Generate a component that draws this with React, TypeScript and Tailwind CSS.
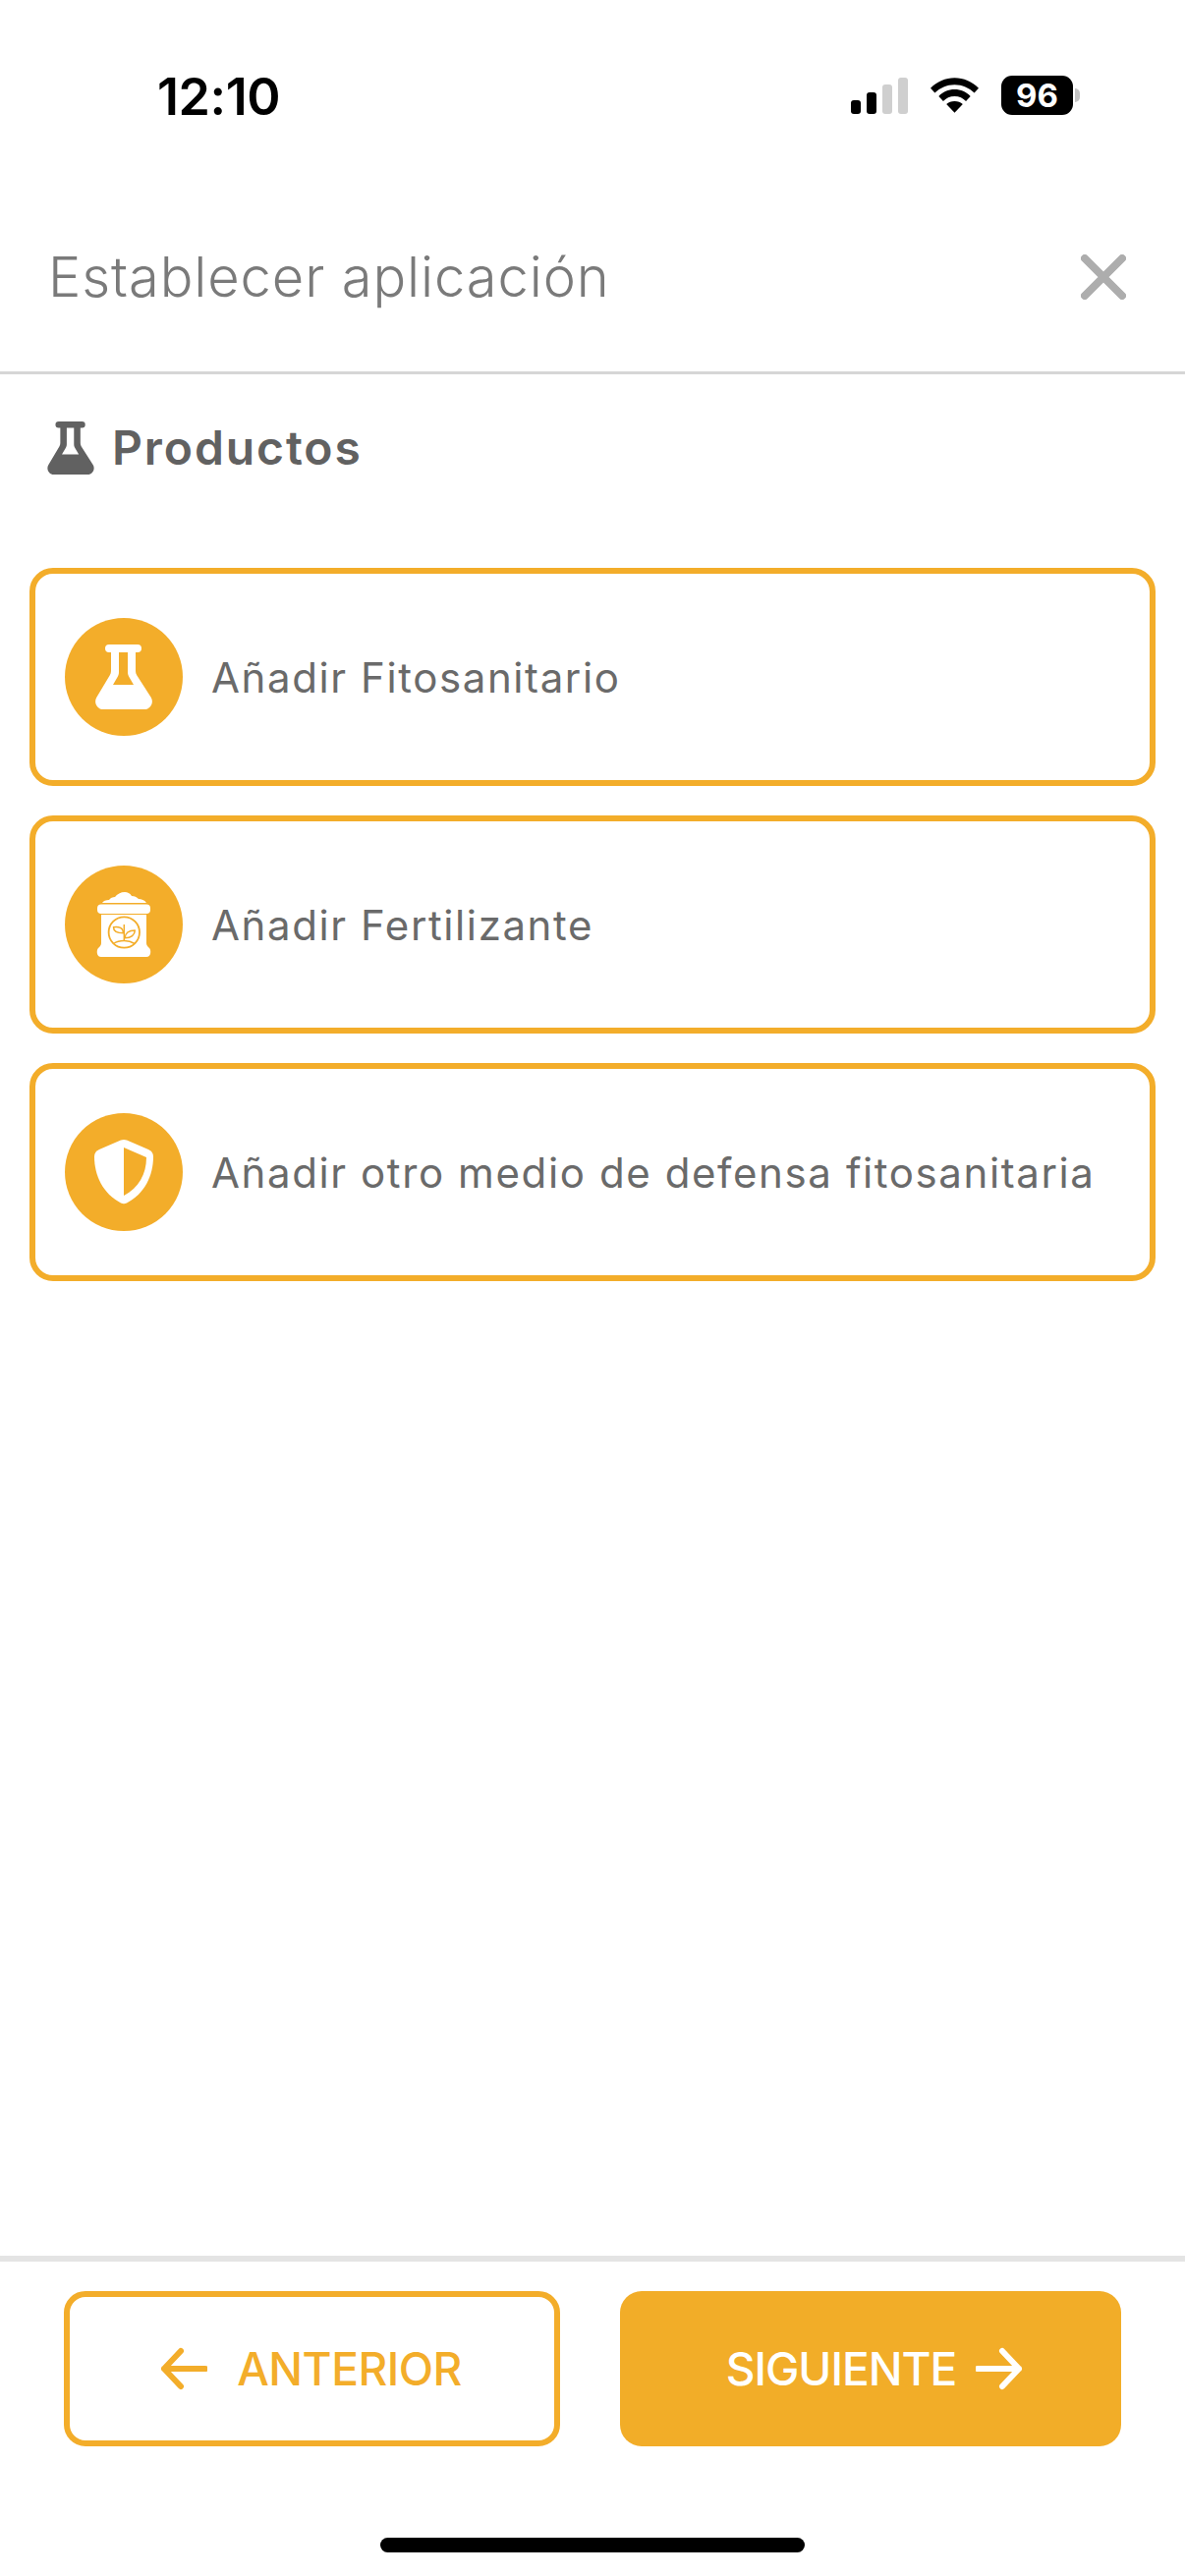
const orange = '#f3ad2a'

function FlaskIcon({ className, hole }: { className: string; hole: string }) {
  return (
    <svg viewBox="0 0 58 66" className={className}>
      <path d="M14 0h29a4 4 0 0 1 0 8h-2v19c0 1.500.4 3 1.200 4.300L56.800 54c3 5-.6 12-6.800 12H8c-6.200 0-9.800-7-6.800-12l13.600-22.700c.8-1.300 1.200-2.800 1.200-4.300V8h-2a4 4 0 0 1 0-8z" fill="currentColor" />
      <path d="M24 8h9v20c0 2 .5 3.500 1.500 5.200L39 41H18l4.500-7.800c1-1.700 1.500-3.200 1.500-5.200z" fill={hole} />
    </svg>
  )
}

function SackIcon() {
  return (
    <svg viewBox="0 0 56 66" className="w-[56px] h-[66px]">
      <path d="M6 11c1-2 4-3 7-3 1-2 4-3 6-3 2-3 6-5 10-5 3 0 5 1 7 4 3 0 5 1 7 3 3 0 6 1 8 4z" fill="#fff" />
      <rect x="1" y="12.500" width="54" height="9.500" rx="4" fill="#fff" />
      <path d="M5 23h46v29c0 2 1 3 3 5 2 2 2 9-3 9H5c-5 0-5-7-3-9 2-2 3-3 3-5z" fill="#fff" />
      <circle cx="28.300" cy="41" r="15.700" fill="none" stroke={orange} strokeWidth="1.800" />
      <g fill="none" stroke={orange} strokeWidth="1.500" strokeLinejoin="round">
        <path d="M28.300 33v17" />
        <path d="M27.500 41.700c-6 0-10-2-10-6 5.500-1 10 1 10 6z" />
        <path d="M29.300 46.700c0-4.500 3.500-7.700 10-7.700 0 4.500-4 7.700-10 7.700z" />
        <path d="M17.500 52.500c3-2 7-3 10.800-3s7.500 1 10.800 3" />
      </g>
    </svg>
  )
}

function ShieldIcon() {
  return (
    <svg viewBox="0 0 62 66" className="w-[62px] h-[66px]">
      <path d="M31 0c1 0 2 .2 3 .6l22 9.400c3 1.300 5 4 5 7 0 20-9 38-27 47.500-2 1-4 1-6 0C10 55 1 37 1 17c0-3 2-5.700 5-7L28 .6c1-.4 2-.6 3-.6z" fill="#fff" />
      <path d="M31 8l23 10c0 17-8 31-23 39z" fill={orange} />
    </svg>
  )
}

function StatusBar() {
  return (
    <div className="h-[198px] flex items-start justify-between pt-[73px] pl-[160px] pr-[107px]">
      <span className="text-[52px] leading-[52px] font-semibold text-black font-['Inter',sans-serif] tracking-[-0.4px]">12:10</span>
      <div className="flex items-center gap-[23px] pt-[4px]">
        <div className="flex items-end gap-[6px] h-[37px]">
          <div className="w-[10px] h-[14px] rounded-[3px] bg-black" />
          <div className="w-[10px] h-[22px] rounded-[3px] bg-black" />
          <div className="w-[10px] h-[30px] rounded-[3px] bg-[#cfcfcf]" />
          <div className="w-[10px] h-[37px] rounded-[3px] bg-[#cfcfcf]" />
        </div>
        <svg viewBox="0 0 50 36" className="w-[49px] h-[36px]">
          <path d="M25 0C15.500 0 7 3.800 0 10.500l4.500 5C10 10.200 17 7 25 7s15 3.200 20.500 8.500l4.500-5C43 3.800 34.500 0 25 0z" fill="#000" />
          <path d="M25 12c-6.500 0-12 2.500-16.500 7l4.700 5c3-3 7-5 11.800-5s8.800 2 11.800 5l4.700-5C37 14.500 31.500 12 25 12z" fill="#000" />
          <path d="M25 24c-3.500 0-6.300 1.200-8.500 3.300L25 36l8.500-8.700C31.300 25.200 28.500 24 25 24z" fill="#000" />
        </svg>
        <div className="flex items-center">
          <div className="w-[73px] h-[40px] rounded-[11px] bg-black flex items-center justify-center text-white text-[33px] leading-none font-bold font-['Inter',sans-serif]">96</div>
          <div className="w-[5px] h-[14px] rounded-r-full bg-[#c4c4c4] ml-[2px]" />
        </div>
      </div>
    </div>
  )
}

function ActionCard({ icon, label }: { icon: React.ReactNode; label: string }) {
  return (
    <div className="h-[222px] rounded-[24px] border-[6px] border-[#f3ad2a] flex items-center pl-[30px]">
      <div className="w-[120px] h-[120px] rounded-full bg-[#f3ad2a] flex items-center justify-center shrink-0">{icon}</div>
      <span className="ml-[29px] text-[42px] text-[#6a6a6a] font-['Inter',sans-serif] tracking-[1.6px] whitespace-nowrap">{label}</span>
    </div>
  )
}

export default function App() {
  return (
    <div className="w-[1206px] h-[2622px] bg-white flex flex-col font-['Inter',sans-serif]">
      <StatusBar />

      <div className="h-[183px] flex items-center justify-between pl-[49px] pr-[60px] pb-[12px] border-b-[3px] border-[#d6d6d6]">
        <h1 className="text-[56px] font-light text-[#7a7a7a] tracking-[0.9px]">Establecer aplicación</h1>
        <svg viewBox="0 0 46 46" className="w-[46px] h-[46px]">
          <path d="M4 4l38 38M42 4L4 42" stroke="#adadad" strokeWidth="8" strokeLinecap="round" />
        </svg>
      </div>

      <div className="flex items-center gap-[18px] pl-[48px] pt-[48px]">
        <FlaskIcon className="w-[48px] h-[54px] text-[#616161]" hole="#ffffff" />
        <h2 className="text-[48px] leading-[54px] font-semibold text-[#616161] tracking-[1.9px]">Productos</h2>
      </div>

      <div className="flex flex-col gap-[30px] px-[30px] mt-[95px]">
        <ActionCard label="Añadir Fitosanitario" icon={<FlaskIcon className="w-[58px] h-[66px] text-white" hole={orange} />} />
        <ActionCard label="Añadir Fertilizante" icon={<SackIcon />} />
        <ActionCard label="Añadir otro medio de defensa fitosanitaria" icon={<ShieldIcon />} />
      </div>

      <div className="mt-auto border-t-[6px] border-[#e4e4e4] h-[326px] flex flex-col">
        <div className="flex justify-between px-[65px] pt-[30px]">
          <button className="w-[505px] h-[158px] rounded-[22px] border-[6px] border-[#f3ad2a] flex items-center justify-center gap-[30px] pr-[2px] text-[#f3ad2a] text-[46px] font-medium tracking-[-0.5px]">
            <svg viewBox="0 0 48 44" className="w-[48px] h-[44px]"><path d="M46 22H4M21 4L4 22l17 18" fill="none" stroke="currentColor" strokeWidth="6" strokeLinecap="round" strokeLinejoin="round" /></svg>
            ANTERIOR
          </button>
          <button className="w-[510px] h-[158px] rounded-[22px] bg-[#f2ad28] flex items-center justify-center gap-[20px] pl-[8px] text-white text-[46px] font-medium tracking-[-1px]">
            SIGUIENTE
            <svg viewBox="0 0 48 44" className="w-[48px] h-[44px]"><path d="M2 22h42M27 4l17 18-17 18" fill="none" stroke="currentColor" strokeWidth="6" strokeLinecap="round" strokeLinejoin="round" /></svg>
          </button>
        </div>
        <div className="mt-auto mb-[24px] mx-auto w-[432px] h-[15px] rounded-full bg-black" />
      </div>
    </div>
  )
}
